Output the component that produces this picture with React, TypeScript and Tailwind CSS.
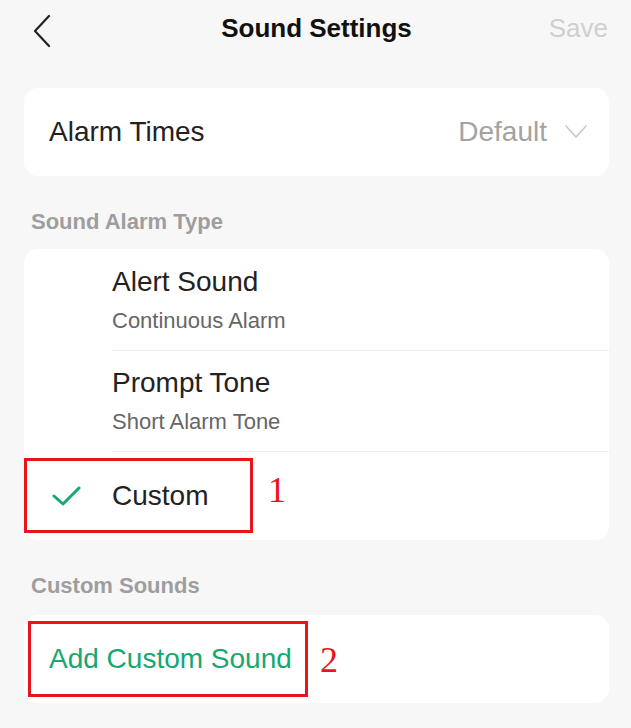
import React from "react";

const sans = { fontFamily: '"Liberation Sans", Arial, sans-serif' };

export default function App() {
  return (
    <div
      className="w-[631px] h-[728px] bg-[#f7f7f7] overflow-hidden"
      style={sans}
    >
      {/* Header */}
      <div className="relative h-[56px] flex items-center justify-between px-[33px]">
        <svg width="20" height="34" viewBox="0 0 20 34" className="mt-[7px]">
          <path d="M16 1 L2 16 L16 31" fill="none" stroke="#222" strokeWidth="2.2" strokeLinecap="round" strokeLinejoin="round" />
        </svg>
        <div className="absolute left-0 right-0 top-0 h-[56px] flex items-center justify-center pointer-events-none">
          <span className="text-[26px] font-bold text-[#111] ml-[2px]">Sound Settings</span>
        </div>
        <span className="text-[26px] text-[#cfcfcf] mr-[-10px]">Save</span>
      </div>

      <div className="pl-[24px] pr-[22px]">
        {/* Alarm Times card */}
        <div className="mt-[32px] h-[88px] bg-white rounded-[14px] flex items-center justify-between pl-[25px] pr-[22px]">
          <span className="text-[28px] text-[#222]">Alarm Times</span>
          <div className="flex items-center gap-[18px]">
            <span className="text-[28px] text-[#a3a3a3]">Default</span>
            <svg width="22" height="14" viewBox="0 0 22 14">
              <path d="M1 1 L11 12 L21 1" fill="none" stroke="#c8c8c8" strokeWidth="1.6" strokeLinecap="round" strokeLinejoin="round" />
            </svg>
          </div>
        </div>

        {/* Section heading */}
        <div className="h-[73px] flex items-center pl-[7px] pt-[18px]">
          <span className="text-[22px] font-bold text-[#9e9e9e]">Sound Alarm Type</span>
        </div>

        {/* Sound alarm type card */}
        <div className="bg-white rounded-[14px] overflow-visible">
          <div className="h-[101px] flex flex-col justify-center pl-[88px] gap-[8px]">
            <span className="text-[28px] leading-[34px] text-[#222]">Alert Sound</span>
            <span className="text-[22px] leading-[28px] text-[#666]">Continuous Alarm</span>
          </div>
          <div className="ml-[88px] border-t border-[#efefef]" />
          <div className="h-[100px] flex flex-col justify-center pl-[88px] gap-[8px]">
            <span className="text-[28px] leading-[34px] text-[#222]">Prompt Tone</span>
            <span className="text-[22px] leading-[28px] text-[#666]">Short Alarm Tone</span>
          </div>
          <div className="ml-[88px] border-t border-[#efefef]" />
          <div className="relative h-[88px] flex items-center">
            <div className="w-[88px] flex items-center pl-[28px]">
              <svg width="30" height="22" viewBox="0 0 30 22">
                <path d="M2 11 L11 19 L27 3" fill="none" stroke="#16a870" strokeWidth="3" strokeLinecap="round" strokeLinejoin="round" />
              </svg>
            </div>
            <span className="text-[28px] text-[#222]">Custom</span>
            <div className="absolute left-0 top-[6px] w-[229px] h-[75px] border-[3px] border-[#e8141c]" />
            <span
              className="absolute left-[244px] top-[18px] text-[36px] leading-[40px] text-[#e8141c]"
              style={{ fontFamily: '"Liberation Serif", "Times New Roman", serif' }}
            >
              1
            </span>
          </div>
        </div>

        {/* Section heading */}
        <div className="h-[75px] flex items-center pl-[7px] pt-[15px]">
          <span className="text-[22px] font-bold text-[#9e9e9e]">Custom Sounds</span>
        </div>

        {/* Custom sounds card */}
        <div className="relative h-[88px] bg-white rounded-[14px] flex items-center pl-[25px]">
          <span className="text-[28px] text-[#15a870]">Add Custom Sound</span>
          <div className="absolute left-[4px] top-[6px] w-[280px] h-[76px] border-[3px] border-[#e8141c]" />
          <span
            className="absolute left-[296px] top-[25px] text-[36px] leading-[40px] text-[#e8141c]"
            style={{ fontFamily: '"Liberation Serif", "Times New Roman", serif' }}
          >
            2
          </span>
        </div>
      </div>
    </div>
  );
}
